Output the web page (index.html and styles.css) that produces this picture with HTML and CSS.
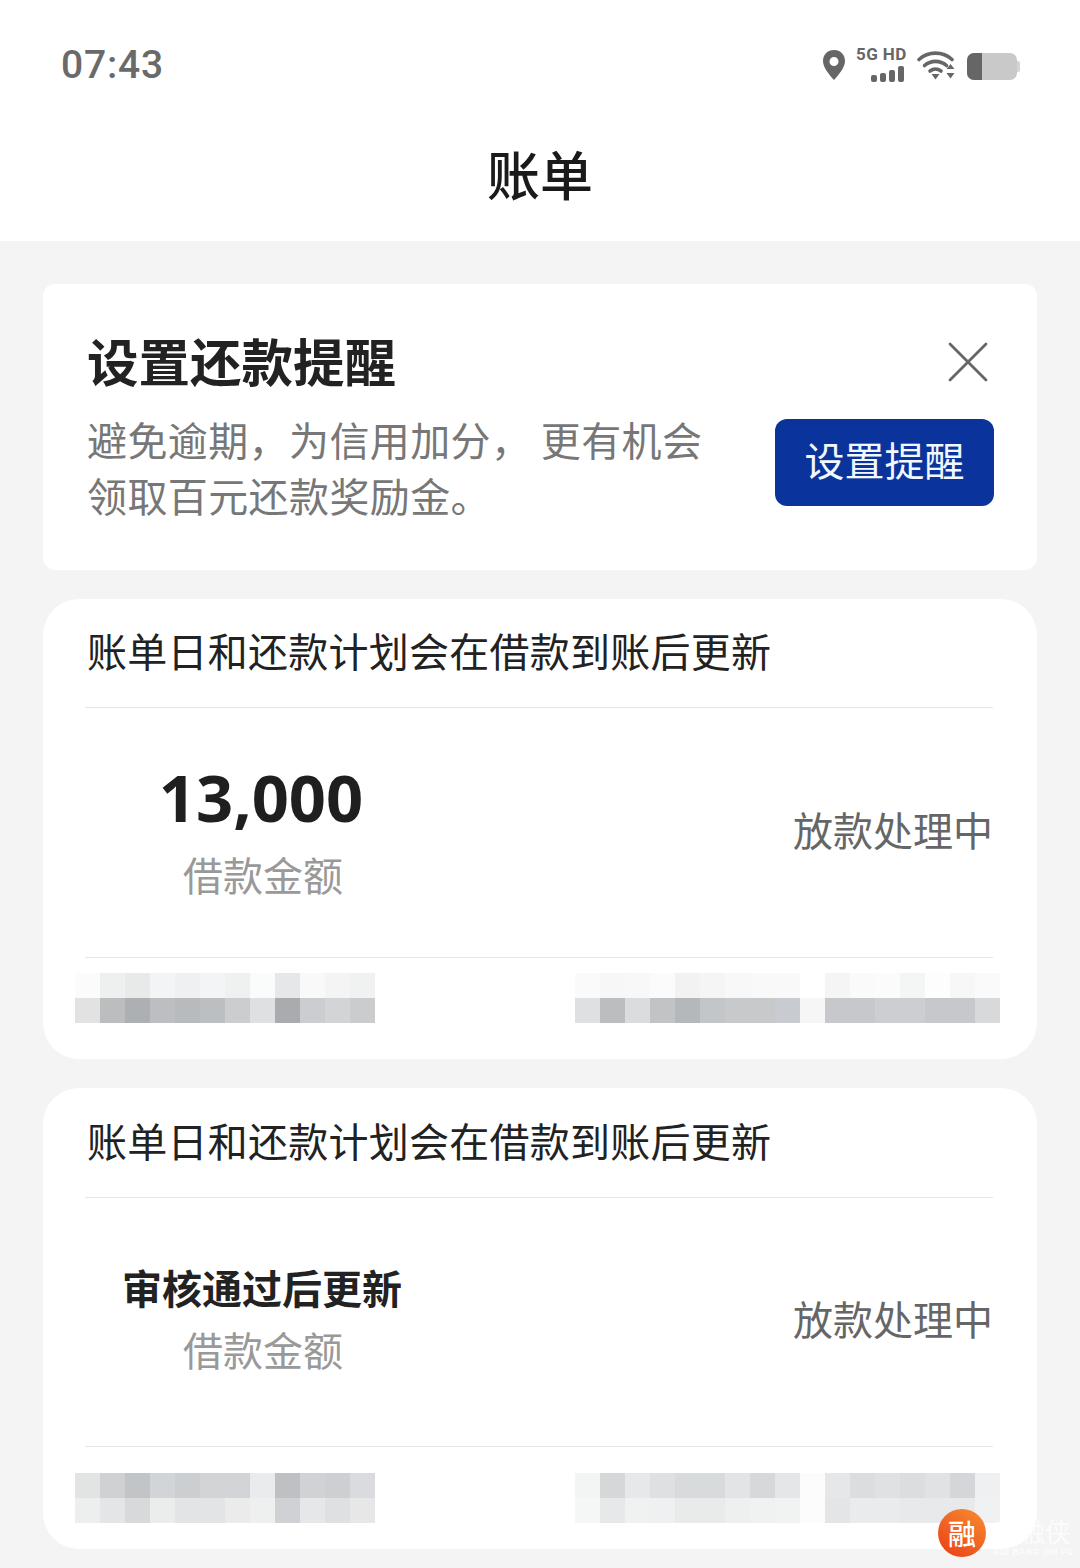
FILE: index.html
```html
<!DOCTYPE html>
<html lang="zh-CN">
<head>
  <meta charset="UTF-8">
  <meta name="viewport" content="width=device-width, initial-scale=1.0">
  <title>账单</title>
  <link rel="stylesheet" href="styles.css">
</head>
<body>

<header class="top">
  <div class="status-bar">
    <span class="time">07:43</span>
    <div class="status-icons">
      <svg class="icon-pin" width="24" height="30" viewBox="0 0 24 30">
        <path fill="#666" fill-rule="evenodd" d="M12 0C5.500 0 1 4.700 1 11c0 6.600 6.300 13.500 11 19 4.700-5.500 11-12.400 11-19C23 4.700 18.500 0 12 0zm0 7a4.500 4.500 0 1 1 0 9 4.500 4.500 0 0 1 0-9z"/>
      </svg>
      <div class="net">
        <span class="net-label">5G HD</span>
        <div class="net-bars">
          <i class="bar-1"></i><i class="bar-2"></i><i class="bar-3"></i><i class="bar-4"></i>
        </div>
      </div>
      <svg class="icon-wifi" width="38" height="30" viewBox="0 0 38 30">
        <g fill="none" stroke="#666" stroke-width="3.600" stroke-linecap="round">
          <path d="M2 9.500C11 1 26 1 35 9.500"/>
          <path d="M7.500 15.500c6.500-5.500 15.500-5.500 22 0"/>
          <path d="M13 21c3.500-2.500 7.500-2.500 11 0"/>
        </g>
        <path fill="#666" d="M14.500 24h8L18.500 29.500zM29.500 19h8l-4-5zM29.500 23h8l-4 5.500z"/>
      </svg>
      <div class="battery">
        <div class="battery-body"><div class="battery-level"></div></div>
        <div class="battery-nub"></div>
      </div>
    </div>
  </div>
  <h1 class="page-title">账单</h1>
</header>

<main class="list">
  <section class="remind">
    <div class="remind-head">
      <h2>设置还款提醒</h2>
      <svg class="close" width="40" height="40" viewBox="0 0 40 40">
        <path d="M2 2l36 36M38 2L2 38" fill="none" stroke="#666" stroke-width="2.800" stroke-linecap="round"/>
      </svg>
    </div>
    <div class="remind-body">
      <p>避免逾期，为信用加分， 更有机会<br>领取百元还款奖励金。</p>
      <button class="remind-btn">设置提醒</button>
    </div>
  </section>

  <section class="bill">
    <div class="bill-head">账单日和还款计划会在借款到账后更新</div>
    <div class="bill-body">
      <div class="amount">
        <div class="amount-num">13,000</div>
        <div class="amount-label">借款金额</div>
      </div>
      <div class="bill-status">放款处理中</div>
    </div>
    <div class="bill-foot">
      <div class="mosaic m-12"
        data-top="#fbfbfb,#eef0f0,#e8eaea,#f3f4f5,#eff0f2,#f3f4f5,#eff0f0,#fafbfb,#e6e7e8,#f9f9f9,#f4f4f5,#f0f1f1"
        data-bottom="#e2e2e2,#bbbdbf,#adb0b2,#bcbec1,#b8bbbe,#bcbfc2,#cbcdcf,#dfe0e2,#a9abaf,#cbcdd0,#d2d4d6,#cacccd"></div>
      <div class="mosaic m-17"
        data-top="#fafafa,#f7f7f7,#f8f8f8,#fbfbfb,#f2f2f2,#f5f5f5,#f8f8f8,#f9f9f9,#f9f9f9,#fff,#f5f5f5,#fafafa,#fbfbfb,#f4f6f6,#fdfdfd,#f7f7f7,#fafafa"
        data-bottom="#dfe0e2,#bcbdbf,#dbdcde,#c1c3c5,#b5b8ba,#c3c6c8,#c8c9cb,#c8c9cb,#c8ccd0,#f6f6f6,#c7c8cb,#c7c8cb,#cdced1,#cdced1,#c6c8cb,#c6c8cb,#d7d9da"></div>
    </div>
  </section>

  <section class="bill bill-review">
    <div class="bill-head">账单日和还款计划会在借款到账后更新</div>
    <div class="bill-body">
      <div class="amount">
        <div class="amount-text">审核通过后更新</div>
        <div class="amount-label">借款金额</div>
      </div>
      <div class="bill-status">放款处理中</div>
    </div>
    <div class="bill-foot">
      <div class="mosaic m-12"
        data-top="#e2e4e4,#cfd1d2,#c2c5c7,#d2d5d8,#cbcfd2,#d2d4d6,#d2d4d7,#e9ebec,#bec1c4,#d0d2d6,#cdcfd3,#dadbde"
        data-bottom="#edeeee,#e3e5e6,#d7d9db,#ebecec,#e3e4e6,#e3e4e6,#eaebea,#eeefef,#d0d1d4,#e6e7e8,#dfe0e2,#e7e7e8"></div>
      <div class="mosaic m-17"
        data-top="#f3f5f5,#d5d7d9,#e6e8e9,#dee0e2,#d8dbdc,#d8dbdc,#e2e4e5,#d6d8da,#e4e6e7,#fcfcfc,#e6e7e9,#dbdde0,#dfe1e3,#dbdde0,#e0e2e4,#d4d6d9,#eff0f1"
        data-bottom="#f5f6f6,#e6e8e9,#f0f1f1,#eff0f1,#e9ebeb,#e9ebeb,#eef0f0,#f0f2f2,#f1f2f2,#fcfcfc,#e4e5e7,#eaebed,#eaebed,#e8e9eb,#e8e9eb,#e8e9eb,#f0f1f2"></div>
    </div>
  </section>
</main>

<div class="watermark">
  <span class="wm-logo">融</span>
  <div class="wm-text">
    <span class="wm-cn">帮融侠</span>
    <span class="wm-en">KUI BANG JIN FU</span>
  </div>
</div>

<script src="script.js"></script>
</body>
</html>
```

FILE: styles.css
```css
* {
  box-sizing: border-box;
}
html, body {
  margin: 0;
  padding: 0;
}
body {
  width: 1080px;
  height: 1568px;
  overflow: hidden;
  position: relative;
  background-color: #f4f4f4;
  font-family: "Noto Sans CJK SC", "Noto Sans", sans-serif;
}

/* top bar */
.top {
  height: 241px;
  background: #fff;
}
.status-bar {
  height: 128px;
  padding: 43px 60px 0 61px;
  display: flex;
  justify-content: space-between;
  align-items: flex-start;
}
.time {
  font-family: Roboto, sans-serif;
  font-weight: 500;
  font-size: 39px;
  line-height: 44px;
  letter-spacing: 0.8px;
  color: #6a6a6a;
}
.status-icons {
  display: flex;
  align-items: flex-start;
  margin-top: 4px;
}
.icon-pin {
  margin: 3px 10px 0 0;
}
.net {
  width: 48px;
  margin-right: 13px;
}
.net-label {
  display: block;
  font-family: Roboto, sans-serif;
  font-weight: 700;
  font-size: 17px;
  line-height: 15px;
  letter-spacing: 0.4px;
  white-space: nowrap;
  color: #666;
}
.net-bars {
  display: flex;
  justify-content: flex-end;
  align-items: flex-end;
  gap: 3px;
  height: 17px;
  margin-top: 3px;
}
.net-bars i {
  display: block;
  width: 6px;
  background: #666;
  border-radius: 2px;
}
.bar-1 { height: 7px; }
.bar-2 { height: 9px; }
.bar-3 { height: 12px; }
.bar-4 { height: 16px; }
.icon-wifi {
  margin: 3px 12px 0 0;
}
.battery {
  display: flex;
  align-items: center;
  margin-top: 6px;
}
.battery-body {
  width: 50px;
  height: 27px;
  border-radius: 7px;
  overflow: hidden;
  background: #c9c9c9;
}
.battery-level {
  width: 15px;
  height: 100%;
  background: #666;
}
.battery-nub {
  width: 3px;
  height: 11px;
  background: #d4d4d4;
  border-radius: 0 2px 2px 0;
}
.page-title {
  margin: 0;
  text-align: center;
  font-size: 53px;
  line-height: 90px;
  font-weight: 500;
  color: #1a1a1a;
}

/* cards */
.list {
  padding: 43px 43px 0;
  display: flex;
  flex-direction: column;
  gap: 29px;
}
.remind {
  height: 286px;
  background: #fff;
  border-radius: 12px;
  padding: 38px 43px 0 44px;
}
.remind-head {
  display: flex;
  justify-content: space-between;
  align-items: center;
  height: 76px;
}
.remind-head h2 {
  margin: 0;
  font-size: 51.500px;
  line-height: 76px;
  font-weight: 700;
  color: #222;
}
.close {
  margin: 4px 6px 0 0;
}
.remind-body {
  display: flex;
  justify-content: space-between;
}
.remind-body p {
  margin: 13px 0 0;
  font-size: 40px;
  line-height: 56px;
  letter-spacing: 0.4px;
  color: #777;
  white-space: nowrap;
}
.remind-btn {
  width: 219px;
  height: 87px;
  margin-top: 21px;
  padding: 0 0 8px;
  border: none;
  border-radius: 12px;
  background-color: #0a349c;
  color: #f2f8ff;
  font-family: inherit;
  font-size: 40px;
}
.bill {
  height: 460px;
  background: #fff;
  border-radius: 36px;
  padding: 0 44px 0 42px;
}
.bill-head {
  height: 109px;
  padding: 22px 0 0 2px;
  border-bottom: 1px solid #e6e6e6;
  font-size: 40px;
  line-height: 58px;
  letter-spacing: 0.25px;
  color: #222;
  white-space: nowrap;
}
.bill-body {
  height: 250px;
  border-bottom: 1px solid #e6e6e6;
  display: flex;
  justify-content: space-between;
  align-items: flex-start;
}
.bill-foot {
  margin: 15px -7px 0 -10px;
  display: flex;
  justify-content: space-between;
}
.bill-review {
  height: 461px;
}
.bill-review .bill-head {
  height: 110px;
  padding-top: 23px;
}
.bill-review .bill-body {
  height: 249px;
}
.bill-review .bill-foot {
  margin-top: 26px;
}
.amount {
  width: 354px;
  padding-left: 2px;
  text-align: center;
}
.amount-num {
  margin: 47px 0 0 -4px;
  font-family: "Open Sans", sans-serif;
  font-weight: 700;
  font-size: 65px;
  line-height: 84px;
  color: #1f1f1f;
}
.amount-text {
  margin-top: 58px;
  margin-left: -2px;
  font-weight: 700;
  font-size: 40px;
  line-height: 62px;
  color: #222;
}
.amount-label {
  font-size: 40px;
  line-height: 56px;
  color: #999;
}
.amount-num + .amount-label {
  margin-top: 7px;
}
.amount-text + .amount-label {
  margin-top: 3px;
}
.bill-status {
  margin-top: 92px;
  font-size: 40px;
  line-height: 58px;
  color: #666;
}
.bill-review .bill-status {
  margin-top: 91px;
}
.mosaic {
  display: grid;
  grid-auto-rows: 25px;
  height: 50px;
}
.mosaic i {
  display: block;
}
.m-12 { grid-template-columns: repeat(12, 25px); }
.m-17 { grid-template-columns: repeat(17, 25px); }

/* watermark over the corner */
.watermark {
  position: absolute;
  left: 938px;
  top: 1509px;
  display: flex;
  align-items: center;
  gap: 7px;
}
.wm-logo {
  width: 48px;
  height: 48px;
  border-radius: 50%;
  background: linear-gradient(35deg, #ea3c16, #f78f32);
  color: #fff;
  font-size: 28px;
  font-weight: 500;
  line-height: 48px;
  text-align: center;
}
.wm-text {
  width: 78px;
  margin-top: 6px;
  display: flex;
  flex-direction: column;
  color: rgba(255, 255, 255, 0.75);
  white-space: nowrap;
}
.wm-cn {
  font-size: 26px;
  line-height: 32px;
}
.wm-en {
  font-family: "Liberation Sans", sans-serif;
  font-weight: 700;
  font-size: 8.500px;
  line-height: 10px;
  letter-spacing: 0.6px;
}
```

FILE: script.js
```js
// fill the blurred blocks from their colour lists
document.querySelectorAll('.mosaic').forEach(block => {
  const colors = block.dataset.top.split(',').concat(block.dataset.bottom.split(','));
  colors.forEach(color => {
    const cell = document.createElement('i');
    cell.style.background = color;
    block.appendChild(cell);
  });
});
```
